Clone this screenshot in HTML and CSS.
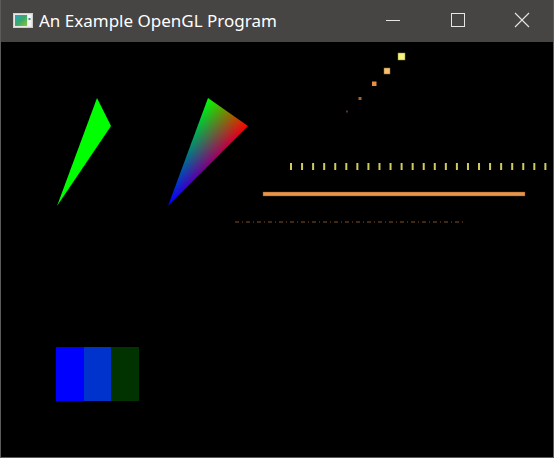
FILE: index.html
```html
<!DOCTYPE html>
<html>
<head>
<meta charset="utf-8">
<title>An Example OpenGL Program</title>
<link rel="stylesheet" href="styles.css">
</head>
<body>
<div class="window">
  <div class="titlebar">
    <svg class="app-icon" width="20" height="15" viewBox="0 0 20 15">
      <defs>
        <linearGradient id="ig" x1="0" y1="0" x2="1" y2="1">
          <stop offset="0" stop-color="#2aa4c8"/>
          <stop offset="0.5" stop-color="#3aa86a"/>
          <stop offset="1" stop-color="#8cc43c"/>
        </linearGradient>
      </defs>
      <rect x="0.5" y="0.5" width="19" height="14" fill="#e8e8e8" stroke="#cfcfcf"/>
      <rect x="2" y="2" width="12" height="11" fill="url(#ig)"/>
      <rect x="15" y="2" width="3" height="11" fill="#f4f4f4"/>
      <rect x="15.5" y="5" width="2" height="2" fill="#3a8a9a"/>
    </svg>
    <span class="title">An Example OpenGL Program</span>
    <div class="caption-buttons">
      <div class="cap-btn">
        <svg width="16" height="16" viewBox="0 0 16 16"><line x1="1" y1="8.5" x2="15" y2="8.5" stroke="#e6e6e6" stroke-width="1"/></svg>
      </div>
      <div class="cap-btn">
        <svg width="16" height="16" viewBox="0 0 16 16"><rect x="1.5" y="1.5" width="13" height="13" fill="none" stroke="#e6e6e6" stroke-width="1"/></svg>
      </div>
      <div class="cap-btn cap-close">
        <svg width="16" height="16" viewBox="0 0 16 16"><path d="M1 1 L15 15 M15 1 L1 15" stroke="#e6e6e6" stroke-width="1.1"/></svg>
      </div>
    </div>
  </div>
  <div class="canvas">
    <svg class="scene" width="552" height="415" viewBox="1 42 552 415">
      <defs>
        <linearGradient id="gG" gradientUnits="userSpaceOnUse" x1="208" y1="98" x2="242" y2="132">
          <stop offset="0" stop-color="#00ff00"/>
          <stop offset="1" stop-color="#000000"/>
        </linearGradient>
        <linearGradient id="gR" gradientUnits="userSpaceOnUse" x1="248" y1="126" x2="203.71" y2="109.59">
          <stop offset="0" stop-color="#ff0000"/>
          <stop offset="1" stop-color="#000000"/>
        </linearGradient>
        <linearGradient id="gB" gradientUnits="userSpaceOnUse" x1="168" y1="206" x2="231.89" y2="114.72">
          <stop offset="0" stop-color="#0000ff"/>
          <stop offset="1" stop-color="#000000"/>
        </linearGradient>
      </defs>

      <!-- points -->
      <rect x="398" y="53" width="7" height="7" fill="#f6f47e" stroke="#8a8a40" stroke-width="0.5"/>
      <rect x="384" y="68" width="6" height="6" fill="#f6c070" stroke="#8a6a40" stroke-width="0.5"/>
      <rect x="372" y="81.5" width="4.5" height="4.5" fill="#e68e46"/>
      <rect x="358.5" y="97" width="3" height="3" fill="#a8642c"/>
      <rect x="346" y="110.5" width="2" height="2" fill="#5e3014"/>

      <!-- green triangle -->
      <polygon points="97,98 111,126 57,206" fill="#00ff00"/>

      <!-- colored triangle -->
      <g class="rgb-tri">
        <polygon points="208,98 248,126 168,206" fill="url(#gG)"/>
        <polygon class="add" points="208,98 248,126 168,206" fill="url(#gR)"/>
        <polygon class="add" points="208,98 248,126 168,206" fill="url(#gB)"/>
      </g>

      <!-- ticks -->
      <g fill="#cfcb5c">
        <rect x="290" y="163" width="2" height="7"/>
        <rect x="301.06" y="163" width="2" height="7"/>
        <rect x="312.12" y="163" width="2" height="7"/>
        <rect x="323.18" y="163" width="2" height="7"/>
        <rect x="334.24" y="163" width="2" height="7"/>
        <rect x="345.3" y="163" width="2" height="7"/>
        <rect x="356.36" y="163" width="2" height="7"/>
        <rect x="367.42" y="163" width="2" height="7"/>
        <rect x="378.48" y="163" width="2" height="7"/>
        <rect x="389.54" y="163" width="2" height="7"/>
        <rect x="400.6" y="163" width="2" height="7"/>
        <rect x="411.66" y="163" width="2" height="7"/>
        <rect x="422.72" y="163" width="2" height="7"/>
        <rect x="433.78" y="163" width="2" height="7"/>
        <rect x="444.84" y="163" width="2" height="7"/>
        <rect x="455.9" y="163" width="2" height="7"/>
        <rect x="466.96" y="163" width="2" height="7"/>
        <rect x="478.02" y="163" width="2" height="7"/>
        <rect x="489.08" y="163" width="2" height="7"/>
        <rect x="500.14" y="163" width="2" height="7"/>
        <rect x="511.2" y="163" width="2" height="7"/>
        <rect x="522.26" y="163" width="2" height="7"/>
        <rect x="533.32" y="163" width="2" height="7"/>
        <rect x="544.38" y="163" width="2" height="7"/>
      </g>

      <!-- thick orange line -->
      <rect x="263" y="192" width="262" height="4" fill="#e8944a" stroke="#7a4a22" stroke-width="0.4"/>

      <!-- dash-dot line -->
      <line x1="235" y1="222" x2="466" y2="222" stroke="#56361a" stroke-width="1.3" stroke-dasharray="4 3 1 3"/>

      <!-- quads -->
      <rect x="56" y="347" width="28" height="54" fill="#0000ff"/>
      <rect x="84" y="347" width="27" height="54" fill="#0033cc"/>
      <rect x="111" y="347" width="28" height="54" fill="#003300"/>
    </svg>
  </div>
</div>
</body>
</html>
```

FILE: styles.css
```css
html, body {
  margin: 0;
  padding: 0;
  background: #000;
}

.window {
  width: 554px;
  height: 458px;
  box-sizing: border-box;
  display: flex;
  flex-direction: column;
  background: #474543;
  border: 1px solid #5c5b5a;
  border-top: none;
  overflow: hidden;
}

.titlebar {
  height: 42px;
  flex: 0 0 42px;
  display: flex;
  align-items: center;
  background: #474543;
  color: #ffffff;
  font-family: "Noto Sans", "Open Sans", sans-serif;
  font-size: 17px;
  margin-left: -1px;
  margin-right: -1px;
}

.app-icon {
  margin-left: 13px;
  margin-top: -1px;
  flex: 0 0 auto;
}

.title {
  margin-left: 6px;
  margin-top: -2px;
  white-space: nowrap;
  letter-spacing: 0;
}

.caption-buttons {
  margin-left: auto;
  display: flex;
  height: 100%;
}

.cap-btn {
  width: 65px;
  height: 100%;
  display: flex;
  align-items: center;
  justify-content: center;
  margin-top: -1px;
}

.cap-close {
  width: 64px;
}

.cap-btn svg {
  display: block;
}

.canvas {
  flex: 1 1 auto;
  background: #000;
  position: relative;
}

.scene {
  display: block;
}

.rgb-tri {
  isolation: isolate;
}

.rgb-tri .add {
  mix-blend-mode: screen;
}
```
